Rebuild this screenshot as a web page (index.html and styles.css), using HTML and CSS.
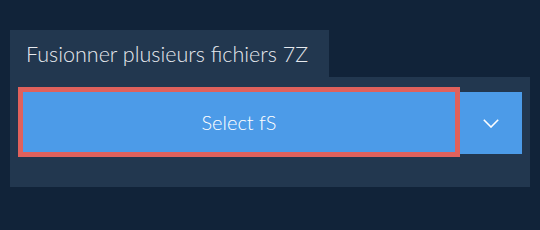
FILE: index.html
```html
<!DOCTYPE html>
<html lang="fr">
<head>
    <meta charset="UTF-8">
    <meta name="viewport" content="width=device-width, initial-scale=1.0">
    <title>Fusionner 7Z</title>
    <link rel="stylesheet" href="styles.css">
</head>
<body>
    <div class="merge-box">
        <div class="tab">Fusionner plusieurs fichiers 7Z</div>
        <div class="panel">
            <div class="btn-group">
                <button class="btn btn-select">Select fS</button>
                <button class="btn btn-toggle" aria-label="plus">
                    <svg width="16" height="9" viewBox="0 0 16 9">
                        <polyline points="0.8,0.8 8,8 15.2,0.8" fill="none" stroke="#fff" stroke-width="1.6"/>
                    </svg>
                </button>
            </div>
        </div>
    </div>
</body>
</html>
```

FILE: styles.css
```css
body {
    font-family: Lato, 'Open Sans', sans-serif;
    margin: 0;
    padding: 30px 10px;
    background-color: #112339;
}
.merge-box {
    width: 520px;
}
.tab {
    display: inline-block;
    background-color: #22374f;
    color: #e6e9ee;
    font-size: 21.5px;
    font-weight: 300;
    height: 47px;
    line-height: 48px;
    padding: 0 16px;
    box-sizing: border-box;
    width: 319px;
    white-space: nowrap;
    vertical-align: top;
}
.panel {
    background-color: #22374f;
    padding: 10px 8px 30px 8px;
}
.btn-group {
    display: flex;
    align-items: flex-start;
}
.btn {
    border: none;
    background-color: #4c9be8;
    color: #fff;
    font-family: Lato, 'Open Sans', sans-serif;
    font-size: 20px;
    font-weight: 300;
    cursor: pointer;
    padding: 0;
}
.btn-select {
    width: 442px;
    height: 70px;
    border: 5px solid #e0615c;
    padding-bottom: 1px;
}
.btn-toggle {
    width: 62px;
    height: 62px;
    margin-top: 5px;
    display: flex;
    align-items: center;
    justify-content: center;
}
```
